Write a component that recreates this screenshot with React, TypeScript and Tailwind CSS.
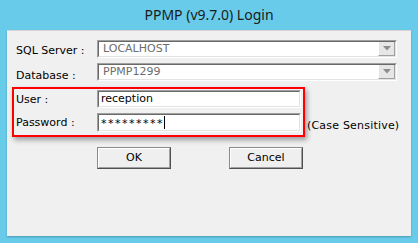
import React from "react";

const font = { fontFamily: '"DejaVu Sans", Verdana, sans-serif' };

function Sunken({ children, className = "" }: { children: React.ReactNode; className?: string }) {
  return (
    <div className={"border border-t-[#a0a0a0] border-l-[#a0a0a0] border-b-white border-r-white " + className}>
      <div className="w-full h-full border border-t-[#696969] border-l-[#696969] border-b-[#e3e3e3] border-r-[#e3e3e3] bg-white flex items-center">
        {children}
      </div>
    </div>
  );
}

function Combo({ value }: { value: string }) {
  return (
    <Sunken className="w-[300px] h-[18px]">
      <span className="flex-1 pl-[4px] text-[11px] leading-[14px] text-[#6d6d6d]">{value}</span>
      <div className="w-[17px] h-full bg-[#e6e6e6] border-r border-b border-r-[#a0a0a0] border-b-[#a0a0a0] border-l border-l-white flex items-center justify-center">
        <svg width="8" height="5" viewBox="0 0 8 5">
          <path d="M0 0 H8 L4 4.5 Z" fill="#8c8c8c" />
        </svg>
      </div>
    </Sunken>
  );
}

function Btn({ label, className = "" }: { label: string; className?: string }) {
  return (
    <div className={"w-[74px] h-[22px] border border-t-[#8a8a8a] border-l-[#8a8a8a] border-b-[#505050] border-r-[#505050] " + className}>
      <div className="w-full h-full border border-t-white border-l-white border-b-[#a0a0a0] border-r-[#a0a0a0] bg-[#efefef] flex items-center justify-center text-[11px] leading-[14px] text-black">
        {label}
      </div>
    </div>
  );
}

export default function App() {
  return (
    <div className="w-[418px] h-[243px] bg-[#68cbea] flex flex-col overflow-hidden" style={font}>
      <div
        className="h-[30px] flex items-center justify-center text-[14px] text-[#1b1b1b] pb-[1px]"
        style={{ fontFamily: '"Noto Sans", "Open Sans", sans-serif' }}
      >
        PPMP (v9.7.0) Login
      </div>
      <div className="mx-[7px] mb-[7px] flex-1 bg-[#f0f0f0] border-t border-t-[#d4d4d4] shadow-[0_1px_2px_rgba(0,0,0,0.25)] pt-[9px] text-[11px] leading-[14px] text-black">
        <div className="flex items-center h-[18px]">
          <span className="w-[90px] pl-[9px] pt-[4px]">SQL Server :</span>
          <Combo value="LOCALHOST" />
        </div>
        <div className="flex items-center h-[18px] mt-[5px]">
          <span className="w-[90px] pl-[9px] pt-[8px]">Database :</span>
          <Combo value="PPMP1299" />
        </div>
        <div className="flex mt-[6px]">
          <div className="ml-[5px] w-[293px] h-[50px] border-2 border-[#ff0000] shadow-[2px_3px_5px_rgba(0,0,0,0.35)] pt-[1px]">
            <div className="flex items-center h-[18px]">
              <span className="w-[83px] pl-[2px] pt-[1px]">User :</span>
              <Sunken className="w-[204px] h-[18px]">
                <span className="pl-[2px] text-black">reception</span>
              </Sunken>
            </div>
            <div className="flex items-center h-[19px] mt-[5px]">
              <span className="w-[83px] pl-[2px]">Password :</span>
              <Sunken className="w-[204px] h-[19px]">
                <span className="pl-[2px] text-black tracking-[1.5px] pt-[3px]">*********</span>
                <span className="w-[1px] h-[13px] bg-black" />
              </Sunken>
            </div>
          </div>
          <span className="self-end mb-[4px] ml-[2px] tracking-[0.2px]">(Case Sensitive)</span>
        </div>
        <div className="flex mt-[10px]">
          <Btn label="OK" className="ml-[90px]" />
          <Btn label="Cancel" className="ml-[58px]" />
        </div>
      </div>
    </div>
  );
}
